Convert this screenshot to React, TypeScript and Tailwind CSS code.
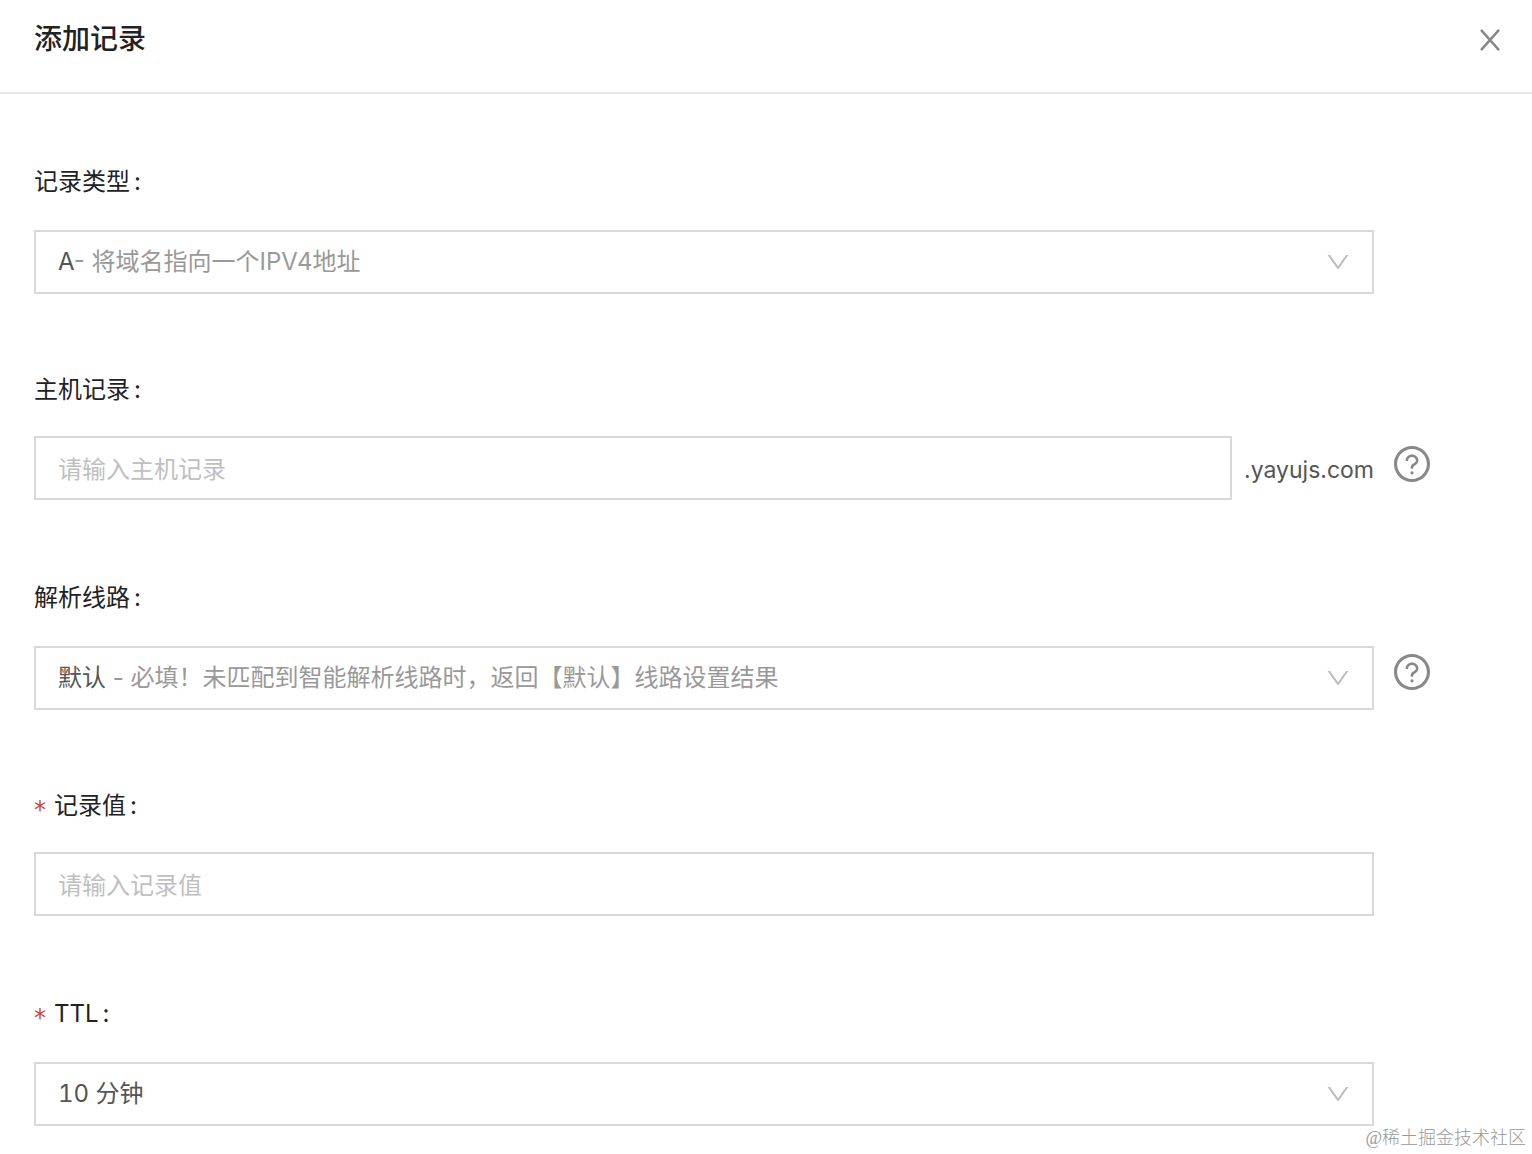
import React, { useState } from "react";
import { AiOutlineDown, AiOutlineQuestionCircle } from "react-icons/ai";

type Option = { value: string; name: string; hint?: string };

const recordTypes: Option[] = [{ value: "A", name: "A", hint: "- 将域名指向一个IPV4地址" }];

const lines: Option[] = [
  {
    value: "default",
    name: "默认",
    hint: " - 必填！未匹配到智能解析线路时，返回【默认】线路设置结果",
  },
];

const ttls: Option[] = [{ value: "600", name: "10 分钟" }];

type FieldProps = {
  id: string;
  label: string;
  required?: boolean;
  help?: boolean;
  children: React.ReactNode;
};

const Field = ({ id, label, required, help, children }: FieldProps) => {
  return (
    <div>
      <label htmlFor={id} className="flex items-center h-12 text-[#222222]">
        {required && (
          <span className="w-5 pt-2 text-[#c8463c] font-['DejaVu_Sans',sans-serif]">*</span>
        )}
        {label}
        <span className="ml-1">:</span>
      </label>
      <div className="flex gap-5 pt-[22px] h-[88px]">
        <div className="flex-1 min-w-0">{children}</div>
        <div className="w-9 pt-[10px]">
          {help && (
            <button type="button" aria-label="帮助" className="block text-[#888888] cursor-pointer">
              <AiOutlineQuestionCircle size={36} viewBox="64 64 896 896" />
            </button>
          )}
        </div>
      </div>
    </div>
  );
};

const Select = ({ id, options }: { id: string; options: Option[] }) => {
  const [value, setValue] = useState(options[0].value);
  const selected = options.find((option) => option.value === value) || options[0];

  return (
    <div className="grid mt-[2px] h-16 items-center border-2 border-[#d9d9d9] bg-white">
      {/* name is dark and hint is gray, so the value is drawn over the native select */}
      <select
        id={id}
        value={value}
        onChange={(e) => setValue(e.target.value)}
        className="col-start-1 row-start-1 w-full h-full appearance-none opacity-0 cursor-pointer"
      >
        {options.map((option) => (
          <option key={option.value} value={option.value}>
            {option.name}
            {option.hint}
          </option>
        ))}
      </select>
      <div
        aria-hidden="true"
        className="col-start-1 row-start-1 flex items-center justify-between pl-[22px] pr-5 pointer-events-none"
      >
        <span
          className={`whitespace-pre truncate text-[#555555] ${selected.hint ? "" : "tabular-nums"}`}
        >
          {selected.name}
          <span className="text-[#999999]">{selected.hint}</span>
        </span>
        <AiOutlineDown size={28} className="shrink-0 text-[#bfbfbf]" />
      </div>
    </div>
  );
};

const inputClass =
  "w-full min-w-0 h-16 px-[22px] pt-[2px] border-2 border-[#d9d9d9] bg-white text-[#555555] placeholder:text-[#bfbfbf] outline-none";

const App = () => {
  const [host, setHost] = useState("");
  const [recordValue, setRecordValue] = useState("");

  return (
    <div className="relative min-h-screen bg-white text-2xl font-['Inter','Noto_Sans_CJK_SC',sans-serif]">
      <header className="flex justify-between pl-[34px] pr-[26px] h-[94px] border-b-2 border-[#e8e8e8]">
        <h1 className="pt-5 text-[28px] leading-[38px] font-medium text-[#222222]">添加记录</h1>
        <button type="button" aria-label="关闭" className="self-start mt-6 text-[#888888] cursor-pointer">
          <svg width="32" height="32" viewBox="0 0 32 32" fill="none" stroke="currentColor" strokeWidth="2.5">
            <path d="M7 5.8 25 26.2M25 5.8 7 26.2" />
          </svg>
        </button>
      </header>

      <form className="flex flex-col gap-[72px] pt-16 pl-[34px] pr-[102px]">
        <Field id="type" label="记录类型">
          <Select id="type" options={recordTypes} />
        </Field>

        <Field id="host" label="主机记录" help>
          <div className="flex items-center gap-3">
            <input
              id="host"
              type="text"
              placeholder="请输入主机记录"
              value={host}
              onChange={(e) => setHost(e.target.value)}
              className={inputClass}
            />
            <span className="pt-1 text-[23px] text-[#555555]">.yayujs.com</span>
          </div>
        </Field>

        <Field id="line" label="解析线路" help>
          <Select id="line" options={lines} />
        </Field>

        <Field id="value" label="记录值" required>
          <input
            id="value"
            type="text"
            placeholder="请输入记录值"
            value={recordValue}
            onChange={(e) => setRecordValue(e.target.value)}
            className={inputClass}
          />
        </Field>

        <Field id="ttl" label="TTL" required>
          <Select id="ttl" options={ttls} />
        </Field>
      </form>

      {/* watermark */}
      <p className="absolute right-[6px] bottom-1 text-lg leading-6 font-light text-[#999999] font-['Liberation_Serif','Noto_Sans_CJK_SC',serif]">
        @稀土掘金技术社区
      </p>
    </div>
  );
};

export default App;
